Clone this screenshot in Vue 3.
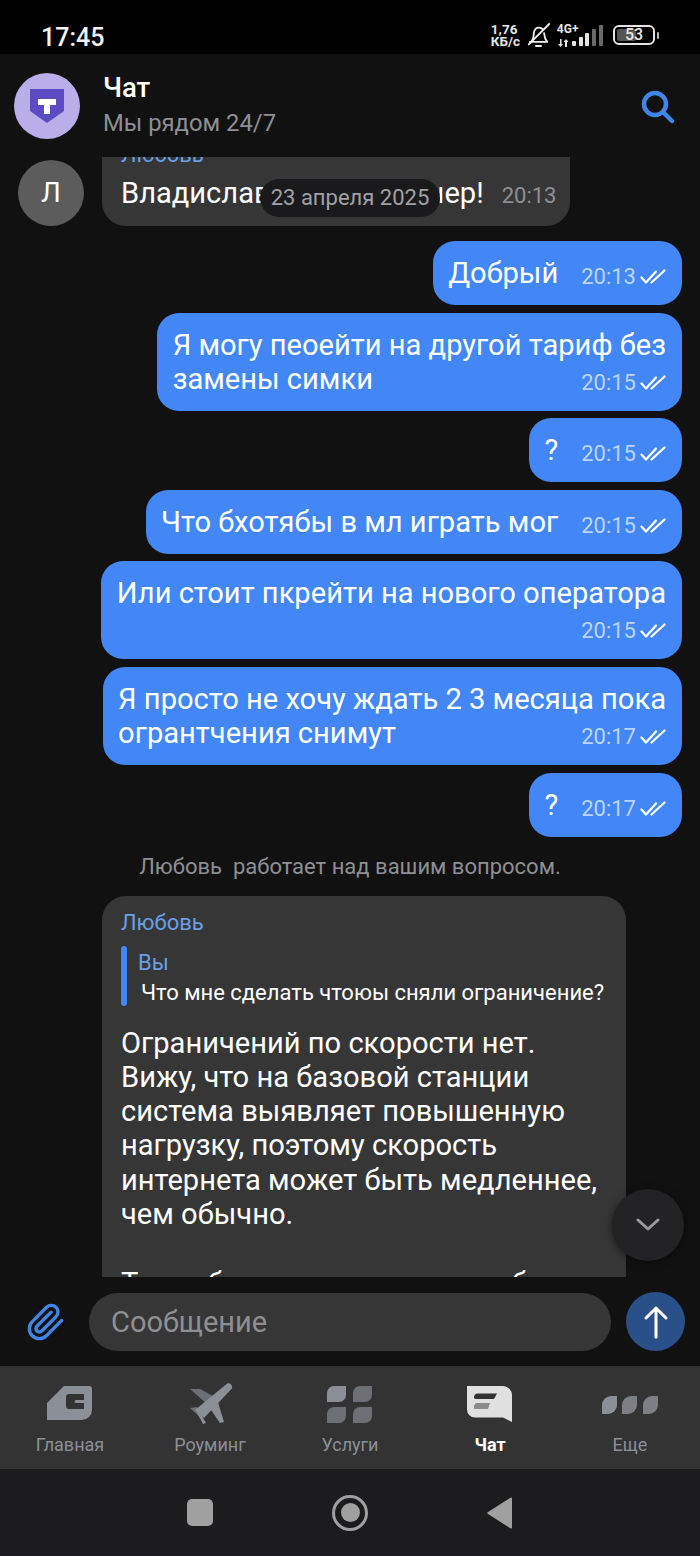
<template>
  <div class="phone">
    <div class="status-bar">
      <span class="clock">17:45</span>
      <div class="status-right">
        <div class="speed">1,76<br />КБ/с</div>
        <svg class="bell" width="24" height="24" viewBox="2 0 22 23.500" fill="none" stroke="#f0f0f0" stroke-width="1.8" stroke-linejoin="round" stroke-linecap="round">
          <path d="M6 17.500c2-2 1.500-5 2-8 .5-3 2.500-5 5-5 1.500 0 3 .7 4 2" />
          <path d="M18 10c.3 3 .4 5.500 3 8.500H4" />
          <path d="M23 1 3 21" />
          <path d="M10 22.500h5" />
        </svg>
        <div class="net">
          <span class="net-type">4G+</span>
          <svg width="12" height="8" viewBox="0 0 12 8" fill="#e4e4e4">
            <path d="M3 0h1.500v5H6L3.500 8 1 5h2zM8 8V3H6.500L9 0l2.500 3H10v5z" />
          </svg>
        </div>
        <div class="bars">
          <i v-for="b in signalBars" :key="b.h" :class="{ off: b.off }" :style="{ height: b.h + 'px' }" />
        </div>
        <div class="battery">
          <div class="battery-body">
            <div class="battery-fill"></div>
            <span>53</span>
          </div>
          <div class="battery-nub"></div>
        </div>
      </div>
    </div>

    <header class="chat-header">
      <div class="logo">
        <svg width="36" height="36" viewBox="0 0 36 36">
          <path d="M1 1h34v22L18 35 1 23z" fill="#5b4cc4" />
          <path d="M9 11h18v6h-6v9h-6v-9H9z" fill="#fff" />
        </svg>
      </div>
      <div class="header-text">
        <div class="header-title">Чат</div>
        <div class="header-sub">Мы рядом 24/7</div>
      </div>
      <svg class="search" width="36" height="36" viewBox="0 0 36 36" fill="none" stroke="#3f86e8" stroke-linecap="round">
        <circle cx="15" cy="15" r="11" stroke-width="4.500" />
        <path d="M24 24l8 8" stroke-width="4.500" />
      </svg>
    </header>

    <main class="chat">
      <div class="agent-row first">
        <div class="agent-avatar">Л</div>
        <div class="bubble-in short">
          <div class="agent-name">Любовь</div>
          <div class="row tight">
            <span>Владислав, добрый вечер!</span>
            <span class="time-in">20:13</span>
          </div>
        </div>
      </div>

      <div class="outgoing">
        <div v-for="(m, i) in outgoing" :key="i" class="bubble-out">
          <div v-for="(line, j) in m.lines" :key="j" class="row">
            <span>{{ line || '\u00a0' }}</span>
            <span v-if="j === m.lines.length - 1" class="meta">
              {{ m.time }}
              <svg width="26" height="16" viewBox="0 0 26 16" fill="none" stroke="#fff" stroke-width="2.200" stroke-linecap="round" stroke-linejoin="round">
                <path d="M1.500 8.500 6 13.500 16 2.500" />
                <path d="M11.500 13.500 24.500 1.500" />
              </svg>
            </span>
          </div>
        </div>
      </div>

      <div class="system-note">Любовь&nbsp; работает над вашим вопросом.</div>

      <div class="agent-row">
        <div class="bubble-in long">
          <div class="agent-name">Любовь</div>
          <div class="reply">
            <div class="reply-author">Вы</div>
            <div class="reply-text">Что мне сделать чтоюы сняли ограничение?</div>
          </div>
          <div class="long-text">Ограничений по скорости нет.<br />Вижу, что на базовой станции<br />система выявляет повышенную<br />нагрузку, поэтому скорость<br />интернета может быть медленнее,<br />чем обычно.<br /><br />Такое бывает, когда много абонен</div>
        </div>
      </div>

      <div class="date-pill">23 апреля 2025</div>
      <button class="scroll-down">
        <svg width="24" height="14" viewBox="0 0 24 14" fill="none" stroke="#9a9a9e" stroke-width="3" stroke-linecap="round" stroke-linejoin="round">
          <path d="M2 2l10 9 10-9" />
        </svg>
      </button>
    </main>

    <div class="composer">
      <svg class="clip" width="40" height="40" viewBox="0 0 24 24" fill="none" stroke="#3f86e8" stroke-width="2" stroke-linecap="round" stroke-linejoin="round">
        <path d="m21.440 11.050-9.190 9.190a6 6 0 0 1-8.490-8.490l8.570-8.570A4 4 0 1 1 18 8.840l-8.590 8.570a2 2 0 0 1-2.830-2.830l8.490-8.480" />
      </svg>
      <div class="input">Сообщение</div>
      <button class="send">
        <svg width="24" height="36" viewBox="0 0 24 36" fill="none" stroke="#fff" stroke-width="3" stroke-linecap="round" stroke-linejoin="round">
          <path d="M12 33V4M2 14 12 4l10 10" />
        </svg>
      </button>
    </div>

    <nav class="tabs">
      <div v-for="t in tabs" :key="t.label" class="tab" :class="{ active: t.active }">
        <svg width="60" height="44" viewBox="0 0 60 44">
          <path v-for="(p, k) in t.paths" :key="k" :d="p.d" :fill="p.fill" />
        </svg>
        <span>{{ t.label }}</span>
      </div>
    </nav>

    <div class="nav-bar">
      <div class="nav-square"></div>
      <div class="nav-circle"><div></div></div>
      <svg width="26" height="32" viewBox="0 0 26 32">
        <path d="M25 1.500V30.500a1 1 0 0 1-1.600.8L1 17a1.200 1.200 0 0 1 0-2L23.400.700A1 1 0 0 1 25 1.500z" fill="#a0a0a0" />
      </svg>
    </div>
  </div>
</template>

<script setup>
const signalBars = [
  { h: 5 },
  { h: 9 },
  { h: 13 },
  { h: 17, off: true },
  { h: 21, off: true }
]

const outgoing = [
  { lines: ['Добрый'], time: '20:13' },
  { lines: ['Я могу пеоейти на другой тариф без', 'замены симки'], time: '20:15' },
  { lines: ['?'], time: '20:15' },
  { lines: ['Что бхотябы в мл играть мог'], time: '20:15' },
  { lines: ['Или стоит пкрейти на нового оператора', ''], time: '20:15' },
  { lines: ['Я просто не хочу ждать 2 3 месяца пока', 'огрантчения снимут'], time: '20:17' },
  { lines: ['?'], time: '20:17' }
]

const light = '#8b8f98'
const dark = '#6c6f75'
const bar = '#333333'

const tabs = [
  {
    label: 'Главная',
    paths: [
      { d: 'M7 21 24 4H49a3 3 0 0 1 3 3V28a10 10 0 0 1-10 10H7z', fill: light },
      { d: 'M26 15a3 3 0 0 1 3-3H44V18H36a1.500 1.500 0 0 0 0 3H44V27H29a3 3 0 0 1-3-3z', fill: bar }
    ]
  },
  {
    label: 'Роуминг',
    paths: [
      { d: 'M10 7 20 7 37 16 28 23z', fill: dark },
      { d: 'M10 26 17 25 23 31 20 35z', fill: dark },
      { d: 'M46 2.500a3.500 3.500 0 0 1 5 5L24 36 15 28z', fill: light },
      { d: 'M29 25 37 17 44 40 40 41z', fill: light },
      { d: 'M16 29 22 34 26 41 23 42z', fill: light }
    ]
  },
  {
    label: 'Услуги',
    paths: [
      { d: 'M14 4H26V13a7 7 0 0 1-7 7H7V11a7 7 0 0 1 7-7z', fill: light },
      { d: 'M40 4H52V13a7 7 0 0 1-7 7H33V11a7 7 0 0 1 7-7z', fill: dark },
      { d: 'M14 25H26V34a7 7 0 0 1-7 7H7V32a7 7 0 0 1 7-7z', fill: dark },
      { d: 'M40 25H52V34a7 7 0 0 1-7 7H33V32a7 7 0 0 1 7-7z', fill: dark }
    ]
  },
  {
    label: 'Чат',
    active: true,
    paths: [
      { d: 'M7 4H43a9 9 0 0 1 9 9V40L43 35.500H15a8 8 0 0 1-8-8z', fill: '#e0e0e0' },
      { d: 'M18 11.500H37L34 17H15.500a2 2 0 0 1-1.500-2.500 4 4 0 0 1 4-3z', fill: '#333333' },
      { d: 'M17 21H30L28 27H15.500a1.500 1.500 0 0 1-1.500-2 4 4 0 0 1 3-4z', fill: '#8a8a8a' }
    ]
  },
  {
    label: 'Еще',
    paths: [
      { d: 'M17 14V23a9 9 0 0 1-9 9H2V23a9 9 0 0 1 9-9z', fill: light },
      { d: 'M37 14V23a9 9 0 0 1-9 9H22V23a9 9 0 0 1 9-9z', fill: '#7c7f86' },
      { d: 'M58 14V23a9 9 0 0 1-9 9H43V23a9 9 0 0 1 9-9z', fill: '#7c7f86' }
    ]
  }
]
</script>

<style>
html,
body {
  margin: 0;
  background: #111112;
}
</style>

<style scoped>
.phone {
  width: 700px;
  height: 1556px;
  display: flex;
  flex-direction: column;
  overflow: hidden;
  background: #111112;
  color: #fff;
  font-family: Roboto, 'Noto Sans', sans-serif;
}

.status-bar {
  height: 54px;
  flex: none;
  box-sizing: border-box;
  background: #000;
  display: flex;
  align-items: center;
  justify-content: space-between;
  padding: 20px 41px 0;
}

.clock {
  font-size: 25px;
  font-weight: 500;
  color: #f2f2f2;
}

.status-right {
  display: flex;
  align-items: center;
  margin-top: -4px;
}

.speed {
  font-size: 13.500px;
  line-height: 12.500px;
  font-weight: 700;
  color: #e4e4e4;
  width: 36px;
}

.bell {
  margin-right: 6px;
}

.net {
  width: 26px;
  display: flex;
  flex-direction: column;
  gap: 4px;
  margin-right: -11px;
}

.net-type {
  font-size: 12px;
  line-height: 11px;
  font-weight: 700;
  color: #e4e4e4;
}

.bars {
  display: flex;
  align-items: flex-end;
  gap: 2.800px;
  height: 21px;
  margin-right: 10px;
}

.bars i {
  display: block;
  width: 4px;
  background: #e4e4e4;
  border-radius: 1px;
}

.bars i.off {
  background: #6a6a6a;
}

.battery {
  display: flex;
  align-items: center;
  gap: 2px;
}

.battery-body {
  position: relative;
  width: 42px;
  height: 20px;
  box-sizing: border-box;
  border: 2px solid #e4e4e4;
  border-radius: 6px;
  padding: 2px;
  text-align: center;
}

.battery-fill {
  width: 19px;
  height: 12px;
  background: #555;
  border-radius: 2px;
}

.battery-body span {
  position: absolute;
  inset: 0;
  font-size: 16px;
  line-height: 16px;
  font-weight: 500;
  color: #e8e8e8;
}

.battery-nub {
  width: 2px;
  height: 7px;
  background: #bbb;
  border-radius: 1px;
}

.chat-header {
  height: 103px;
  flex: none;
  box-sizing: border-box;
  display: flex;
  align-items: center;
  padding: 0 24px 0 14px;
  background: #111112;
}

.logo {
  width: 66px;
  height: 66px;
  flex: none;
  border-radius: 50%;
  background: #b9aeea;
  display: flex;
  align-items: center;
  justify-content: center;
  margin-top: 1px;
}

.header-text {
  flex: 1;
  margin-left: 23px;
  margin-top: -2px;
}

.header-title {
  font-size: 27.500px;
  line-height: 36px;
  font-weight: 500;
}

.header-sub {
  font-size: 23.800px;
  line-height: 34px;
  color: #8e8f94;
}

.search {
  margin-top: 2px;
}

.chat {
  position: relative;
  flex: 1;
  min-height: 0;
  overflow: hidden;
  font-size: 29.100px;
  line-height: 34.300px;
}

.agent-row {
  display: flex;
  align-items: flex-end;
  padding-left: 102px;
}

.agent-row.first {
  margin-top: -29px;
  padding-left: 18px;
  gap: 18px;
}

.agent-avatar {
  width: 66px;
  height: 66px;
  border-radius: 50%;
  background: #5c5c5c;
  display: flex;
  align-items: center;
  justify-content: center;
  font-size: 28px;
}

.bubble-in {
  box-sizing: border-box;
  background: #363636;
  border-radius: 24px;
  padding: 12px 15px 16px 19px;
}

.bubble-in.short {
  width: 468px;
}

.bubble-in.long {
  width: 524px;
  flex: none;
}

.agent-name {
  font-size: 22px;
  line-height: 30px;
  color: #6a9fe8;
}

.short .agent-name {
  margin-bottom: 6px;
}

.time-in {
  font-size: 22px;
  line-height: 24px;
  color: #8e8f94;
}

.outgoing {
  display: flex;
  flex-direction: column;
  align-items: flex-end;
  gap: 7.600px;
  padding: 15px 18px 0 0;
}

.bubble-out {
  background: #4287f5;
  border-radius: 22px;
  padding: 15px 16px 15px 15.500px;
}

.row {
  display: flex;
  justify-content: space-between;
  align-items: baseline;
  gap: 23px;
  height: 34px;
  white-space: nowrap;
}

.row.tight {
  gap: 18px;
}

.meta {
  display: flex;
  align-items: center;
  gap: 4px;
  font-size: 22px;
  line-height: 24px;
  color: #bcd4fb;
  transform: translateY(1px);
}

.system-note {
  height: 59px;
  box-sizing: border-box;
  padding-top: 3px;
  display: flex;
  align-items: center;
  justify-content: center;
  font-size: 22px;
  color: #8e8f94;
}

.reply {
  position: relative;
  box-sizing: border-box;
  margin-top: 8px;
  padding: 2px 0 0 17px;
  height: 60px;
}

.reply::before {
  content: '';
  position: absolute;
  left: 0;
  top: 0;
  bottom: 0;
  width: 6px;
  border-radius: 3px;
  background: #4287f5;
}

.reply-author {
  font-size: 22px;
  line-height: 30px;
  color: #6a9fe8;
}

.reply-text {
  font-size: 22px;
  line-height: 30px;
  padding-left: 3px;
  white-space: nowrap;
}

.long-text {
  margin-top: 20px;
  white-space: nowrap;
}

.date-pill {
  position: absolute;
  left: 260px;
  top: 22px;
  width: 180px;
  height: 38px;
  border-radius: 19px;
  background: #1a1a1c;
  color: #a0a1a6;
  font-size: 22px;
  line-height: 38px;
  text-align: center;
  white-space: nowrap;
}

.scroll-down {
  position: absolute;
  left: 612px;
  top: 1032px;
  width: 72px;
  height: 72px;
  border: 0;
  padding: 0;
  border-radius: 50%;
  background: #222224;
  box-shadow: 0 2px 8px rgba(0, 0, 0, 0.5);
  display: flex;
  align-items: center;
  justify-content: center;
}

.composer {
  height: 89px;
  flex: none;
  box-sizing: border-box;
  display: flex;
  align-items: center;
  padding: 0 15px 0 26px;
  background: #111112;
}

.clip {
  flex: none;
  margin-right: 23px;
  margin-top: 1px;
}

.input {
  flex: 1;
  height: 58px;
  margin-top: 1px;
  box-sizing: border-box;
  padding-left: 22px;
  border-radius: 29px;
  background: #363636;
  color: #8e8f94;
  font-size: 29px;
  line-height: 58px;
}

.send {
  flex: none;
  width: 59px;
  height: 59px;
  margin-left: 15px;
  margin-top: 0;
  border: 0;
  padding: 0;
  border-radius: 50%;
  background: #2a5089;
  display: flex;
  align-items: center;
  justify-content: center;
}

.tabs {
  height: 103px;
  flex: none;
  display: grid;
  grid-template-columns: repeat(5, 1fr);
  background: #333333;
}

.tab {
  display: flex;
  flex-direction: column;
  align-items: center;
  padding-top: 16px;
  font-size: 18px;
  line-height: 26px;
  color: #8b8f98;
}

.tab svg {
  display: block;
  margin-bottom: 6px;
}

.tab.active {
  color: #fff;
  font-weight: 700;
}

.nav-bar {
  height: 87px;
  flex: none;
  background: #1c1c1e;
  display: grid;
  grid-template-columns: repeat(3, 150px);
  justify-content: center;
  justify-items: center;
  align-items: center;
}

.nav-square {
  width: 26px;
  height: 27px;
  border-radius: 5px;
  background: #a0a0a0;
}

.nav-circle {
  width: 36px;
  height: 36px;
  box-sizing: border-box;
  border: 3.500px solid #a0a0a0;
  border-radius: 50%;
  display: flex;
  align-items: center;
  justify-content: center;
}

.nav-circle div {
  width: 19px;
  height: 19px;
  border-radius: 50%;
  background: #a0a0a0;
}
</style>
